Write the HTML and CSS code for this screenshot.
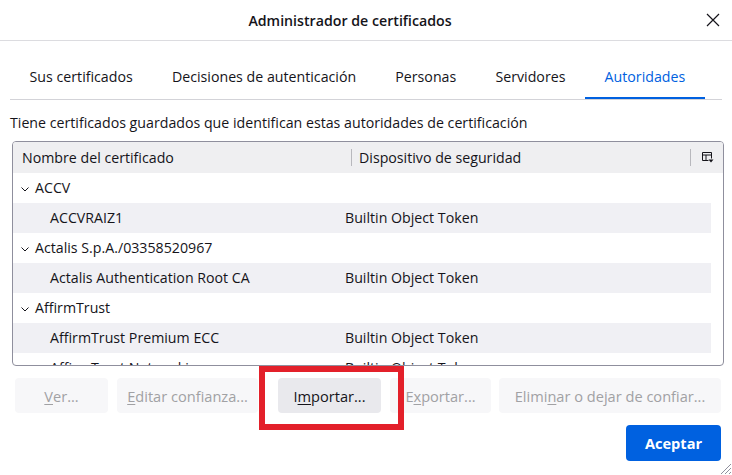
FILE: index.html
```html
<!DOCTYPE html>
<html lang="es">
<head>
<meta charset="utf-8">
<title>Administrador de certificados</title>
<link rel="stylesheet" href="styles.css">
</head>
<body>
<div class="dialog">
  <header class="titlebar">
    <div class="title">Administrador de certificados</div>
    <button class="close" aria-label="Cerrar">
      <svg width="14" height="14" viewBox="0 0 14 14"><path d="M1 1L13 13M13 1L1 13" stroke="#15141a" stroke-width="1.2" fill="none"/></svg>
    </button>
  </header>

  <nav class="tabs">
    <div class="tab">Sus certificados</div>
    <div class="tab">Decisiones de autenticación</div>
    <div class="tab">Personas</div>
    <div class="tab">Servidores</div>
    <div class="tab active">Autoridades</div>
  </nav>

  <p class="desc">Tiene certificados guardados que identifican estas autoridades de certificación</p>

  <div class="tree">
    <div class="tree-head">
      <div class="hcell name">Nombre del certificado</div>
      <div class="hsep"></div>
      <div class="hcell device">Dispositivo de seguridad</div>
      <div class="hsep"></div>
      <div class="picker">
        <svg width="12" height="11" viewBox="0 0 12 11"><path d="M0.5 0.5H9.5V6.5M0.5 0.5V8.5H6.5M0.5 3H9.5M4 3V8.5" stroke="#15141a" stroke-width="1" fill="none"/><path d="M6.5 7.5H11.5L9 10.5Z" fill="#15141a"/></svg>
      </div>
    </div>
    <div class="tree-body">
      <div class="row group"><span class="cell name"><svg class="chev" width="8" height="5" viewBox="0 0 8 5"><path d="M0.5 0.5L4 4L7.5 0.5" stroke="#15141a" stroke-width="1" fill="none"/></svg>ACCV</span><span class="cell"></span></div>
      <div class="row child alt"><span class="cell name">ACCVRAIZ1</span><span class="cell">Builtin Object Token</span></div>
      <div class="row group"><span class="cell name"><svg class="chev" width="8" height="5" viewBox="0 0 8 5"><path d="M0.5 0.5L4 4L7.5 0.5" stroke="#15141a" stroke-width="1" fill="none"/></svg>Actalis S.p.A./03358520967</span><span class="cell"></span></div>
      <div class="row child alt"><span class="cell name">Actalis Authentication Root CA</span><span class="cell">Builtin Object Token</span></div>
      <div class="row group"><span class="cell name"><svg class="chev" width="8" height="5" viewBox="0 0 8 5"><path d="M0.5 0.5L4 4L7.5 0.5" stroke="#15141a" stroke-width="1" fill="none"/></svg>AffirmTrust</span><span class="cell"></span></div>
      <div class="row child alt"><span class="cell name">AffirmTrust Premium ECC</span><span class="cell">Builtin Object Token</span></div>
      <div class="row child"><span class="cell name">AffirmTrust Networking</span><span class="cell">Builtin Object Token</span></div>
    </div>
  </div>

  <div class="actions">
    <button class="btn w-ver" disabled><u>V</u>er...</button>
    <button class="btn w-edit" disabled><u>E</u>ditar confianza...</button>
    <div class="highlight-wrap">
      <button class="btn w-imp">I<u>m</u>portar...</button>
      <div class="highlight"></div>
    </div>
    <button class="btn w-exp" disabled>E<u>x</u>portar...</button>
    <button class="btn w-del" disabled>Elimi<u>n</u>ar o dejar de confiar...</button>
  </div>

  <div class="footer">
    <button class="primary">Aceptar</button>
  </div>

  <svg class="grip" width="14" height="14" viewBox="0 0 14 14"><path d="M13 3L3 13M13 7L7 13M13 11L11 13" stroke="#8f8f9d" stroke-width="1" fill="none"/></svg>
</div>
</body>
</html>
```

FILE: styles.css
```css
* { box-sizing: border-box; }

html, body {
  margin: 0;
  padding: 0;
  background: #ffffff;
}

body {
  font-family: "Segoe UI", "Open Sans", "Noto Sans", sans-serif;
  font-size: 14.2px;
  color: #15141a;
}

.dialog {
  position: relative;
  width: 732px;
  height: 475px;
  overflow: hidden;
}

.titlebar {
  display: flex;
  align-items: center;
  height: 41px;
  border-bottom: 1px solid #dcdce0;
}

.title {
  flex: 1;
  text-align: center;
  font-weight: 600;
  font-size: 14.2px;
  padding-left: 4px;
}

.close {
  width: 30px;
  height: 40px;
  border: 0;
  background: none;
  padding: 0 6px 0 0;
  display: flex;
  align-items: center;
  justify-content: flex-end;
  margin-right: 6px;
}

.tabs {
  display: flex;
  margin: 17px 10px 0 10px;
  border-bottom: 1px solid #d3d3d8;
}

.tab {
  padding: 9px 19.6px 10px;
  line-height: 20px;
  border-bottom: 2px solid transparent;
  white-space: nowrap;
}

.tab.active {
  color: #0061e0;
  border-bottom-color: #0061e0;
}

.desc {
  margin: 13px 0 0 10px;
  line-height: 20px;
}

.tree {
  margin: 8px 8px 0 12px;
  height: 225px;
  border: 1px solid #8f8f9d;
  border-radius: 4px;
  overflow: hidden;
}

.tree-head {
  display: flex;
  align-items: center;
  height: 31px;
  background: #efeff1;
}

.hcell {
  line-height: 20px;
  white-space: nowrap;
}

.hcell.name {
  width: 338px;
  padding-left: 9px;
}

.hcell.device {
  flex: 1;
  padding-left: 7px;
}

.hsep {
  width: 1px;
  height: 17px;
  background: #b8b8bd;
}

.picker {
  width: 32px;
  display: flex;
  justify-content: center;
  padding-left: 2px;
}

.tree-body {
  padding-right: 12px;
}

.row {
  display: flex;
  align-items: center;
  height: 30px;
  white-space: nowrap;
}

.row.alt {
  background: #f0f0f4;
}

.cell {
  line-height: 20px;
}

.cell.name {
  width: 332px;
  display: flex;
  align-items: center;
}

.group .cell.name {
  padding-left: 8px;
}

.child .cell.name {
  padding-left: 37px;
}

.chev {
  margin-right: 6px;
  margin-top: 2px;
}

.actions {
  display: flex;
  gap: 9px;
  margin: 12px 0 0 15px;
}

.btn {
  font-family: inherit;
  font-size: 14.6px;
  height: 35px;
  border: 0;
  border-radius: 4px;
  background: #e9e9ed;
  color: #15141a;
  padding: 0;
  white-space: nowrap;
}

.btn:disabled {
  background: #f7f7f9;
  color: #a1a1a4;
}

.btn u {
  text-decoration-thickness: 1px;
  text-underline-offset: 2px;
}

.w-ver { width: 93px; }
.w-edit { width: 141px; }
.w-imp { width: 103px; }
.w-exp { width: 101px; margin-left: 0; }
.w-del { width: 222px; margin-left: -1px; }

.highlight-wrap {
  position: relative;
  margin-left: 11px;
  display: flex;
}

.highlight {
  position: absolute;
  left: -19px;
  top: -12px;
  width: 145px;
  height: 64px;
  border: 6px solid #e3202a;
  pointer-events: none;
}

.footer {
  display: flex;
  justify-content: flex-end;
  margin: 12px 11px 0 0;
}

.primary {
  font-family: inherit;
  font-size: 14.6px;
  font-weight: 700;
  width: 95px;
  height: 36px;
  border: 0;
  border-radius: 4px;
  background: #0061e0;
  color: #ffffff;
}

.grip {
  position: absolute;
  right: 0;
  bottom: 0;
}
```
